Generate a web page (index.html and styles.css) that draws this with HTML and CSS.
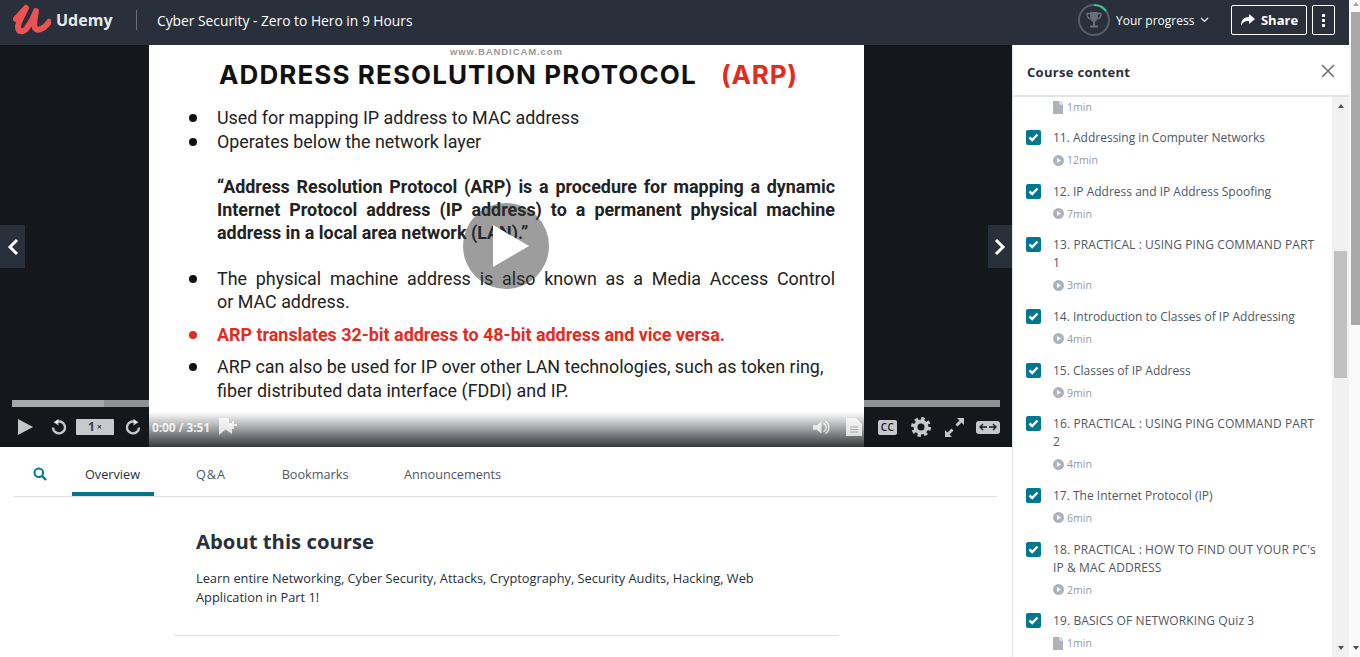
FILE: index.html
```html
<!DOCTYPE html>
<html lang="en">
<head>
<meta charset="utf-8">
<title>Cyber Security - Zero to Hero in 9 Hours</title>
<link rel="stylesheet" href="styles.css">
</head>
<body>
<div class="app">
  <div class="page">
    <header class="topbar">
      <svg class="logo-mark" width="38" height="32" viewBox="0 0 38 32"><path d="M3 16 L13 5 C11 10 5 19 5 24 C5 29 10 30 14 25 C17 21 21 14 23 8 C22 14 20 21 22 25 C24 28 30 27 36 19" fill="none" stroke="#ec5252" stroke-width="6" stroke-linecap="round" stroke-linejoin="round"/></svg>
      <span class="logo-text">Udemy</span>
      <span class="topbar-sep"></span>
      <span class="course-title">Cyber Security - Zero to Hero in 9 Hours</span>
      <div class="topbar-right">
        <svg class="ring" width="34" height="34" viewBox="0 0 34 34">
          <circle cx="17" cy="17" r="15" fill="none" stroke="#585e68" stroke-width="2"/>
          <path d="M17 2 A15 15 0 0 1 29 8" fill="none" stroke="#3dc795" stroke-width="2"/>
          <path d="M13 9 H21 V14 C21 17 19 18.500 17 19 C15 18.500 13 17 13 14 Z M16 18 H18 V22.500 H16 Z M13 22.500 H21 V24.500 H13 Z" fill="#686f7a"/>
          <path d="M13 10.500 H10 C10 14 11.500 15.500 13.500 16 M21 10.500 H24 C24 14 22.500 15.500 20.500 16" fill="none" stroke="#686f7a" stroke-width="1.400"/>
        </svg>
        <span class="progress-label">Your progress</span>
        <svg class="chev" width="9" height="6" viewBox="0 0 9 6"><path d="M1 1 L4.500 4.500 L8 1" fill="none" stroke="#fff" stroke-width="1.200"/></svg>
        <button class="btn btn-share">
          <svg width="15" height="13" viewBox="0 0 15 13"><path d="M9 0 L15 5 L9 10 V7 C5 7 2.500 8 1 12 C1 6 4 3 9 3 Z" fill="#fff"/></svg>
          <span>Share</span>
        </button>
        <button class="btn btn-more" aria-label="More"><i></i><i></i><i></i></button>
      </div>
    </header>
    <div class="columns">
      <main class="main">
        <section class="player">
          <div class="slide">
            <div class="watermark">www.BANDICAM.com</div>
            <h1 class="slide-title">ADDRESS RESOLUTION PROTOCOL <em>(ARP)</em></h1>
            <ul class="slide-list top">
              <li>Used for mapping IP address to MAC address</li>
              <li>Operates below the network layer</li>
            </ul>
            <p class="slide-quote">“Address Resolution Protocol (ARP) is a procedure for mapping a dynamic Internet Protocol address (IP address) to a permanent physical machine address in a local area network (LAN).”</p>
            <ul class="slide-list">
              <li class="just">The physical machine address is also known as a Media Access Control or&nbsp;MAC address.</li>
              <li class="red">ARP translates 32-bit address to 48-bit address and vice versa.</li>
              <li>ARP can also be used for IP over other LAN technologies, such as token ring, fiber distributed data interface (FDDI) and IP.</li>
            </ul>
          </div>
          <button class="nav-arrow prev" aria-label="Previous"><svg width="12" height="18" viewBox="0 0 12 18"><path d="M10 2 L3 9 L10 16" fill="none" stroke="#fff" stroke-width="3"/></svg></button>
          <button class="nav-arrow next" aria-label="Next"><svg width="12" height="18" viewBox="0 0 12 18"><path d="M2 2 L9 9 L2 16" fill="none" stroke="#fff" stroke-width="3"/></svg></button>
          <div class="big-play"><svg width="38" height="42" viewBox="0 0 38 42"><path d="M1 0 L37 21 L1 42 Z" fill="#fff"/></svg></div>
          <div class="controls">
            <div class="bar"><span class="bar-buffer"></span></div>
            <div class="ctrl-row">
              <svg class="c-play" width="15" height="16" viewBox="0 0 15 16"><path d="M0 0 L15 8 L0 16 Z"/></svg>
              <svg class="c-back" width="15" height="16" viewBox="0 0 15 16"><path d="M5 3.200 A6 6 0 1 1 2 8.500" fill="none" stroke-width="2.400"/><path d="M7.500 0 V6.500 L2.500 3.200 Z"/></svg>
              <span class="rate">1<small>×</small></span>
              <svg class="c-fwd" width="15" height="16" viewBox="0 0 15 16"><path d="M10 3.200 A6 6 0 1 0 13 8.500" fill="none" stroke-width="2.400"/><path d="M7.500 0 V6.500 L12.500 3.200 Z"/></svg>
              <span class="time">0:00 / 3:51</span>
              <svg class="c-mark" width="18" height="18" viewBox="0 0 18 18"><path d="M0 0 H10 V5 H13 V16 L6.500 11.500 L0 17 Z"/><path d="M13 3 H15 V6 H18 V8 H15 V11 H13 V8 H10 V6 H13 Z"/></svg>
              <span class="ctrl-spacer"></span>
              <svg class="c-vol" width="17" height="15" viewBox="0 0 18 15"><path d="M0 5 H4 L9 1 V14 L4 10 H0 Z"/><path d="M11 3 A5 5 0 0 1 11 12 M13 1 A7.500 7.500 0 0 1 13 14" fill="none" stroke-width="1.500"/></svg>
              <svg class="c-doc" width="16" height="18" viewBox="0 0 16 18"><path d="M0 0 H10 L16 6 V18 H0 Z"/><path class="cut" d="M4 9 H12 M4 11.500 H12 M4 14 H12" fill="none" stroke-width="1"/></svg>
              <span class="cc">CC</span>
              <svg class="c-gear" width="20" height="20" viewBox="0 0 20 20"><circle cx="10" cy="10" r="5.500" fill="none" stroke-width="4"/><circle cx="10" cy="10" r="8.500" fill="none" stroke-width="3" stroke-dasharray="3.400 3.275"/></svg>
              <svg class="c-exp" width="19" height="19" viewBox="0 0 19 19"><path d="M12 0 H19 V7 L16.500 4.500 L12.500 8.500 L10.500 6.500 L14.500 2.500 Z M7 19 H0 V12 L2.500 14.500 L6.500 10.500 L8.500 12.500 L4.500 16.500 Z"/></svg>
              <span class="theater"><svg width="18" height="8" viewBox="0 0 18 8"><path d="M4 1 L1 4 L4 7 M1 4 H8 M14 1 L17 4 L14 7 M17 4 H10" fill="none" stroke="#14171c" stroke-width="1.300"/></svg></span>
            </div>
          </div>
        </section>
        <nav class="tabs">
          <svg class="tab-search" width="14" height="14" viewBox="0 0 14 14"><circle cx="5.800" cy="5.800" r="4.300" fill="none" stroke="#007791" stroke-width="2"/><path d="M9 9 L13 13" stroke="#007791" stroke-width="2.400"/></svg>
          <a class="tab active">Overview</a>
          <a class="tab tab-qa">Q&amp;A</a>
          <a class="tab">Bookmarks</a>
          <a class="tab">Announcements</a>
        </nav>
        <section class="about">
          <h2>About this course</h2>
          <p>Learn entire Networking, Cyber Security, Attacks, Cryptography, Security Audits, Hacking, Web Application in Part 1!</p>
        </section>
        <hr class="about-rule">
      </main>
      <aside class="side">
        <div class="side-head">
          <span>Course content</span>
          <svg width="14" height="14" viewBox="0 0 14 14"><path d="M1 1 L13 13 M13 1 L1 13" stroke="#686f7a" stroke-width="1.500"/></svg>
        </div>
        <div class="side-body">
          <div class="lessons">
            <div class="dur first"><svg class="ico-doc" width="10" height="13" viewBox="0 0 10 13"><path d="M0 0 H6.500 V3.500 H10 V13 H0 Z M7.500 0 L10 2.500 H7.500 Z"/></svg>1min</div>

            <div class="lesson"><span class="check"><svg width="11" height="9" viewBox="0 0 11 9"><path d="M1.500 4.500 L4.200 7 L9.500 1.500" fill="none" stroke="#fff" stroke-width="2.400"/></svg></span><div><div class="l-title">11. Addressing in Computer Networks</div><div class="dur"><svg class="ico-play" width="11" height="11" viewBox="0 0 11 11"><path fill-rule="evenodd" d="M5.500 0 A5.500 5.500 0 1 1 5.500 11 A5.500 5.500 0 1 1 5.500 0 Z M4 3 V8 L8 5.500 Z"/></svg>12min</div></div></div>

            <div class="lesson"><span class="check"><svg width="11" height="9" viewBox="0 0 11 9"><path d="M1.500 4.500 L4.200 7 L9.500 1.500" fill="none" stroke="#fff" stroke-width="2.400"/></svg></span><div><div class="l-title">12. IP Address and IP Address Spoofing</div><div class="dur"><svg class="ico-play" width="11" height="11" viewBox="0 0 11 11"><path fill-rule="evenodd" d="M5.500 0 A5.500 5.500 0 1 1 5.500 11 A5.500 5.500 0 1 1 5.500 0 Z M4 3 V8 L8 5.500 Z"/></svg>7min</div></div></div>

            <div class="lesson"><span class="check"><svg width="11" height="9" viewBox="0 0 11 9"><path d="M1.500 4.500 L4.200 7 L9.500 1.500" fill="none" stroke="#fff" stroke-width="2.400"/></svg></span><div><div class="l-title caps">13. PRACTICAL : USING PING COMMAND PART 1</div><div class="dur"><svg class="ico-play" width="11" height="11" viewBox="0 0 11 11"><path fill-rule="evenodd" d="M5.500 0 A5.500 5.500 0 1 1 5.500 11 A5.500 5.500 0 1 1 5.500 0 Z M4 3 V8 L8 5.500 Z"/></svg>3min</div></div></div>

            <div class="lesson"><span class="check"><svg width="11" height="9" viewBox="0 0 11 9"><path d="M1.500 4.500 L4.200 7 L9.500 1.500" fill="none" stroke="#fff" stroke-width="2.400"/></svg></span><div><div class="l-title">14. Introduction to Classes of IP Addressing</div><div class="dur"><svg class="ico-play" width="11" height="11" viewBox="0 0 11 11"><path fill-rule="evenodd" d="M5.500 0 A5.500 5.500 0 1 1 5.500 11 A5.500 5.500 0 1 1 5.500 0 Z M4 3 V8 L8 5.500 Z"/></svg>4min</div></div></div>

            <div class="lesson"><span class="check"><svg width="11" height="9" viewBox="0 0 11 9"><path d="M1.500 4.500 L4.200 7 L9.500 1.500" fill="none" stroke="#fff" stroke-width="2.400"/></svg></span><div><div class="l-title">15. Classes of IP Address</div><div class="dur"><svg class="ico-play" width="11" height="11" viewBox="0 0 11 11"><path fill-rule="evenodd" d="M5.500 0 A5.500 5.500 0 1 1 5.500 11 A5.500 5.500 0 1 1 5.500 0 Z M4 3 V8 L8 5.500 Z"/></svg>9min</div></div></div>

            <div class="lesson"><span class="check"><svg width="11" height="9" viewBox="0 0 11 9"><path d="M1.500 4.500 L4.200 7 L9.500 1.500" fill="none" stroke="#fff" stroke-width="2.400"/></svg></span><div><div class="l-title caps">16. PRACTICAL : USING PING COMMAND PART 2</div><div class="dur"><svg class="ico-play" width="11" height="11" viewBox="0 0 11 11"><path fill-rule="evenodd" d="M5.500 0 A5.500 5.500 0 1 1 5.500 11 A5.500 5.500 0 1 1 5.500 0 Z M4 3 V8 L8 5.500 Z"/></svg>4min</div></div></div>

            <div class="lesson"><span class="check"><svg width="11" height="9" viewBox="0 0 11 9"><path d="M1.500 4.500 L4.200 7 L9.500 1.500" fill="none" stroke="#fff" stroke-width="2.400"/></svg></span><div><div class="l-title">17. The Internet Protocol (IP)</div><div class="dur"><svg class="ico-play" width="11" height="11" viewBox="0 0 11 11"><path fill-rule="evenodd" d="M5.500 0 A5.500 5.500 0 1 1 5.500 11 A5.500 5.500 0 1 1 5.500 0 Z M4 3 V8 L8 5.500 Z"/></svg>6min</div></div></div>

            <div class="lesson"><span class="check"><svg width="11" height="9" viewBox="0 0 11 9"><path d="M1.500 4.500 L4.200 7 L9.500 1.500" fill="none" stroke="#fff" stroke-width="2.400"/></svg></span><div><div class="l-title caps">18. PRACTICAL : HOW TO FIND OUT YOUR PC's IP &amp; MAC ADDRESS</div><div class="dur"><svg class="ico-play" width="11" height="11" viewBox="0 0 11 11"><path fill-rule="evenodd" d="M5.500 0 A5.500 5.500 0 1 1 5.500 11 A5.500 5.500 0 1 1 5.500 0 Z M4 3 V8 L8 5.500 Z"/></svg>2min</div></div></div>

            <div class="lesson"><span class="check"><svg width="11" height="9" viewBox="0 0 11 9"><path d="M1.500 4.500 L4.200 7 L9.500 1.500" fill="none" stroke="#fff" stroke-width="2.400"/></svg></span><div><div class="l-title caps">19. BASICS OF NETWORKING Quiz 3</div><div class="dur"><svg class="ico-doc" width="10" height="13" viewBox="0 0 10 13"><path d="M0 0 H6.500 V3.500 H10 V13 H0 Z M7.500 0 L10 2.500 H7.500 Z"/></svg>1min</div></div></div>
          </div>
          <div class="inner-scroll">
            <span class="arrow-up"></span>
            <span class="inner-thumb"></span>
            <span class="arrow-down"></span>
          </div>
        </div>
      </aside>
    </div>
  </div>
  <div class="outer-scroll">
    <span class="arrow-up"></span>
    <span class="outer-thumb"></span>
    <span class="arrow-down"></span>
  </div>
</div>
</body>
</html>
```
FILE: styles.css
```css
* { box-sizing: border-box; }
html, body { margin: 0; height: 100%; overflow: hidden; background: #fff; }
body { font-family: "Open Sans", sans-serif; color: #29303b; }
button { font-family: inherit; padding: 0; cursor: pointer; }

.app { display: flex; width: 1360px; height: 657px; overflow: hidden; }
.page { width: 1349px; display: flex; flex-direction: column; }

.topbar { height: 45px; padding-bottom: 5px; background: #29303b; display: flex; align-items: center; color: #fff; flex: none; }
.logo-mark { margin: -3px 0 0 13px; flex: none; }
.logo-text { margin-left: 5px; font-size: 16px; font-weight: 700; color: #e8e9eb; width: 59px; }
.topbar-sep { width: 1px; height: 20px; background: #686f7a; margin-left: 21px; }
.course-title { margin-left: 20px; font-size: 13.800px; }
.topbar-right { margin-left: auto; display: flex; align-items: center; padding-right: 14px; }
.ring { margin-right: 5px; }
.progress-label { font-size: 12px; width: 84px; }
.chev { margin-right: 22px; }
.btn { background: transparent; border: 1px solid #fff; border-radius: 2px; height: 30px; color: #fff; display: flex; align-items: center; justify-content: center; }
.btn-share { width: 76px; gap: 6px; font-size: 13px; font-weight: 700; margin-right: 5px; }
.btn-more { width: 23px; flex-direction: column; gap: 2px; }
.btn-more i { width: 3px; height: 3px; background: #fff; display: block; }

.columns { flex: 1; display: flex; min-height: 0; }
.main { width: 1012px; flex: none; overflow: hidden; }

.player { position: relative; height: 402px; background: #14171c; display: flex; justify-content: center; overflow: hidden; }
.slide { width: 715px; height: 402px; background: #fff; margin-left: 1px; padding: 0 29px 0 68px; font-family: Roboto, sans-serif; font-size: 17.900px; line-height: 23px; color: #222; position: relative; }
.watermark { font-family: "Liberation Sans", sans-serif; font-size: 9.500px; font-weight: 700; color: #999; line-height: 12px; height: 14px; padding-left: 233px; padding-top: 1px; letter-spacing: .9px; white-space: nowrap; }
.slide-title { margin: 0 0 0 2px; font-family: Inter, sans-serif; font-weight: 700; font-size: 26px; line-height: 32px; color: #111; white-space: nowrap; letter-spacing: 1.100px; }
.slide-title em { font-style: normal; color: #e32b1f; margin-left: 17px; letter-spacing: .8px; }
.slide-list { list-style: none; margin: 0; padding: 0; }
.slide-list li { position: relative; }
.slide-list li::before { content: ""; position: absolute; left: -28px; top: 8px; width: 8px; height: 8px; border-radius: 50%; background: #111; }
.slide-list.top { margin-top: 15px; height: 46px; line-height: 23.500px; }
.slide-quote { margin: 23px 0 0; font-weight: 700; text-align: justify; }
.slide-list .just { margin-top: 23px; text-align: justify; }
.slide-list .red { color: #e32b1f; font-weight: 700; margin-top: 10px; }
.slide-list .red::before { background: #e32b1f; }
.slide-list .red + li { margin-top: 9px; line-height: 24px; }

.nav-arrow { position: absolute; top: 180px; width: 25px; height: 43px; border: 0; background: #29303b; display: flex; align-items: center; justify-content: center; }
.nav-arrow.prev { left: 0; }
.nav-arrow.next { right: 0; width: 24px; }
.big-play { position: absolute; left: 463px; top: 158px; width: 86px; height: 86px; border-radius: 50%; background: rgba(50,50,50,.48); display: flex; align-items: center; justify-content: center; padding-left: 10px; }

.controls { position: absolute; left: 0; right: 0; bottom: 0; height: 47px; padding: 0 12px; background: linear-gradient(to bottom, rgba(20,23,28,0) 26%, rgba(20,23,28,.86) 100%); }
.bar { height: 7px; width: 988px; background: rgba(255,255,255,.52); }
.bar-buffer { display: block; height: 7px; width: 92px; background: rgba(255,255,255,.22); }
.ctrl-row { display: flex; align-items: center; height: 40px; }
.ctrl-row svg { fill: rgba(255,255,255,.76); stroke: rgba(255,255,255,.76); stroke-width: 0; flex: none; }
.c-play { margin-left: 6px; }
.c-back { margin-left: 18px; }
.rate { margin-left: 10px; width: 38px; height: 16px; background: #c8c9cc; border-radius: 1px; color: #3c3f44; font-size: 12px; font-weight: 700; display: flex; align-items: center; justify-content: center; line-height: 16px; flex: none; }
.rate small { font-size: 9px; margin-left: 2px; }
.c-fwd { margin-left: 12px; }
.time { margin-left: 11px; font-size: 12px; font-weight: 700; color: rgba(255,255,255,.85); width: 67px; white-space: nowrap; letter-spacing: -.1px; flex: none; }
.ctrl-spacer { flex: 1; }
.c-vol { margin-right: 16px; }
.c-doc { margin-right: 16px; }
.ctrl-row svg.c-doc .cut { stroke: #aaa; stroke-width: 1; }
.ctrl-row svg.c-back path[fill="none"], .ctrl-row svg.c-fwd path[fill="none"] { stroke-width: 2.400; }
.ctrl-row svg.c-vol path[fill="none"] { stroke-width: 1.500; }
.ctrl-row svg.c-gear circle:first-child { stroke-width: 4; }
.ctrl-row svg.c-gear circle:last-child { stroke-width: 3; }
.cc { width: 19px; height: 15px; background: #c8c9cc; border-radius: 2px; color: #14171c; font-size: 10px; font-weight: 600; letter-spacing: .4px; display: flex; align-items: center; justify-content: center; margin-right: 14px; flex: none; }
.c-gear { margin-right: 14px; }
.c-exp { margin-right: 12px; }
.theater { width: 24px; height: 13px; background: #c8c9cc; border-radius: 3px; display: flex; align-items: center; justify-content: center; flex: none; }
.ctrl-row .theater svg { stroke-width: 1.300; stroke: #14171c; fill: none; }

.tabs { height: 50px; margin: 0 15px 0 14px; border-bottom: 1px solid #dedfe0; display: flex; align-items: flex-start; }
.tab-search { margin: 20px 25px 0 19px; flex: none; }
.tab { font-size: 12.700px; padding: 0 13px; margin-right: 29.500px; line-height: 55px; height: 49px; color: #505763; border-bottom: 4px solid transparent; white-space: nowrap; }
.tab.active { border-bottom-color: #007791; color: #29303b; width: 82px; margin-right: 29px; }
.tab-qa { letter-spacing: 1px; }

.about { padding: 29px 0 0 196px; width: 780px; }
.about h2 { margin: 0; font-size: 20.300px; line-height: 30px; font-weight: 700; color: #29303b; }
.about p { margin: 13px 0 0; font-size: 12.800px; line-height: 19px; color: #29303b; }
.about-rule { margin: 28px 174px 0; width: 664px; border: 0; border-top: 1px solid #dedfe0; }

.side { flex: 1; border-left: 1px solid #e4e4e4; display: flex; flex-direction: column; min-width: 0; }
.side-head { height: 52px; flex: none; border-bottom: 2px solid #e4e5e6; display: flex; align-items: center; justify-content: space-between; padding: 4px 14px 0 14px; font-size: 13px; font-weight: 700; letter-spacing: .3px; color: #29303b; }
.side-head svg { margin-top: -2px; }
.side-body { flex: 1; display: flex; min-height: 0; }
.lessons { flex: 1; overflow: hidden; padding-left: 13px; font-size: 12px; }
.inner-scroll { width: 17px; flex: none; background: #f1f1f1; display: flex; flex-direction: column; align-items: center; padding-top: 7px; }
.inner-thumb { width: 13px; height: 127px; background: #c1c1c1; margin-top: 143px; }
.arrow-up, .arrow-down { display: block; width: 0; height: 0; border-left: 3.500px solid transparent; border-right: 3.500px solid transparent; flex: none; }
.arrow-up { border-bottom: 4px solid #505050; }
.arrow-down { border-top: 4px solid #505050; margin-top: auto; margin-bottom: 7px; }
.outer-scroll { width: 11px; flex: none; background: #f9f9f9; display: flex; flex-direction: column; padding: 2px 0 0 2px; }
.outer-scroll .arrow-up { margin-left: 2px; border-bottom-color: #a3a3a3; }
.outer-scroll .arrow-down { margin-left: 2px; border-top-color: #505050; }
.outer-thumb { width: 9px; height: 313px; background: #a8a8a8; margin-top: 6px; }

.dur { display: flex; align-items: center; gap: 3px; height: 18px; font-size: 10.500px; color: #959ba6; margin-top: 4px; }
.dur.first { margin: 1px 0 13px 27px; }
.dur svg { fill: #adb3bd; flex: none; }
.ico-doc { margin-right: 1px; }
.lesson { display: flex; gap: 12px; padding-bottom: 13.670px; }
.check { width: 15px; height: 15px; background: #007791; border-radius: 2px; flex: none; margin-top: 1px; display: flex; align-items: center; justify-content: center; }
.l-title { font-size: 12px; line-height: 18px; color: #505763; width: 266px; }
.l-title.caps { letter-spacing: .1px; }
```
